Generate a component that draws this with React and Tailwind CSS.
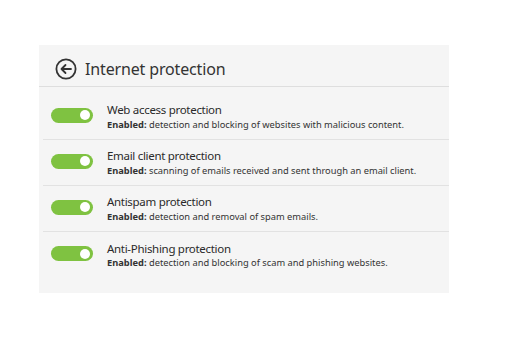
import React from 'react';

const items = [
  { title: 'Web access protection', desc: 'detection and blocking of websites with malicious content.' },
  { title: 'Email client protection', desc: 'scanning of emails received and sent through an email client.' },
  { title: 'Antispam protection', desc: 'detection and removal of spam emails.' },
  { title: 'Anti-Phishing protection', desc: 'detection and blocking of scam and phishing websites.' },
];

const Toggle = () => (
  <div className="w-[42px] h-[15px] rounded-full bg-[#7fc241] flex items-center justify-end pr-[3px] shrink-0 mb-[3px]">
    <div className="w-[10px] h-[10px] rounded-full bg-white" />
  </div>
);

export default function App() {
  return (
    <div className="w-[515px] h-[350px] bg-white pt-[45px] pl-[39px]" style={{ fontFamily: '"Noto Sans", "Open Sans", sans-serif' }}>
      <div className="w-[410px] h-[248px] bg-[#f5f5f5]">
        {/* header */}
        <div className="h-[42px] pt-[6px] flex items-center pl-[16px] gap-[8px] border-b border-[#dedede]">
          <svg width="22" height="22" viewBox="0 0 22 22" fill="none" stroke="#333" strokeWidth="1.8" strokeLinecap="round" strokeLinejoin="round">
            <circle cx="11" cy="11" r="9.6" />
            <path d="M16 11H6.5M10.5 7L6.5 11L10.5 15" />
          </svg>
          <span className="text-[16px] text-[#333] tracking-[-0.15px]">Internet protection</span>
        </div>

        <div className="pt-[7px]">
          {items.map((item, i) => (
            <div
              key={i}
              className={`ml-[4px] h-[46px] flex items-center pl-[8px] gap-[14px] ${i < items.length - 1 ? 'border-b border-[#e2e2e2]' : ''}`}
            >
              <Toggle />
              <div className="flex flex-col leading-none">
                <span className="text-[11.5px] text-[#2a2a2a] tracking-[-0.3px]">{item.title}</span>
                <span className="text-[9.3px] text-[#333] mt-[4px]">
                  <b className="font-bold">Enabled:</b> {item.desc}
                </span>
              </div>
            </div>
          ))}
        </div>
      </div>
    </div>
  );
}
